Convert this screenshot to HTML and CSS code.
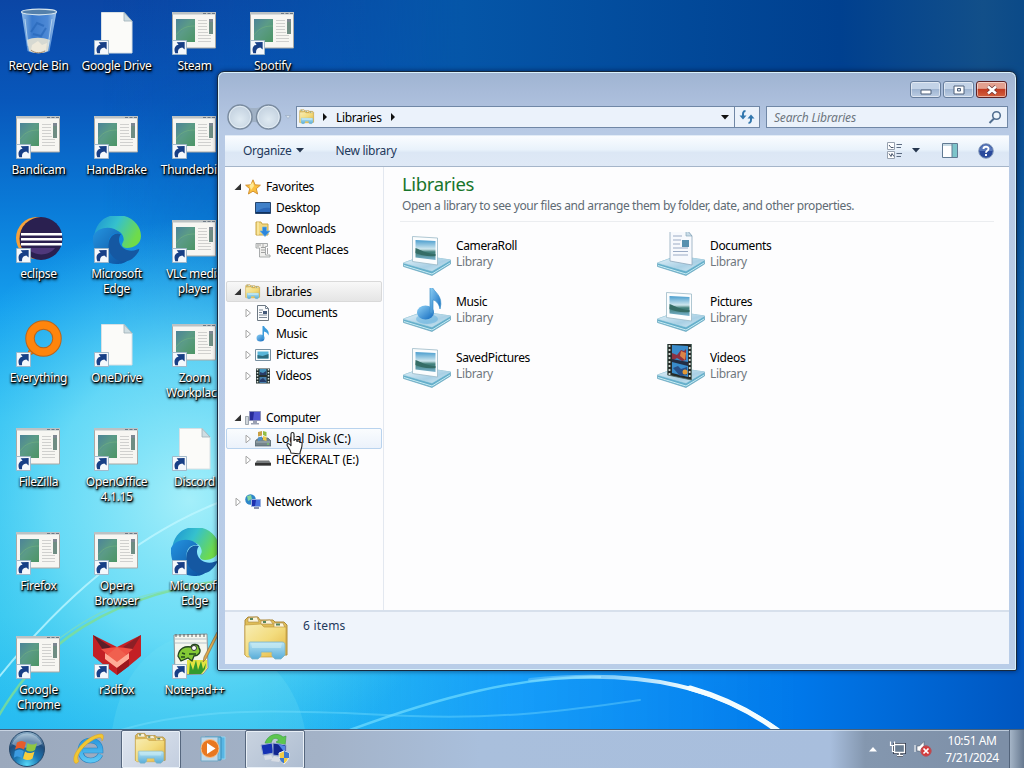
FILE: index.html
```html
<!DOCTYPE html>
<html lang="en">
<head>
<meta charset="utf-8">
<title>Libraries</title>
<link rel="stylesheet" href="styles.css">
</head>
<body>
<svg class="defs" width="0" height="0">
  <defs>
    <linearGradient id="gGreen" x1="0" y1="0" x2="1" y2="1"><stop offset="0" stop-color="#4c8398"/><stop offset=".45" stop-color="#5b9b87"/><stop offset="1" stop-color="#4c9564"/></linearGradient>
    <linearGradient id="gFolder" x1="0" y1="0" x2="1" y2="1"><stop offset="0" stop-color="#f7edb5"/><stop offset=".5" stop-color="#f3dc7e"/><stop offset="1" stop-color="#e4b43e"/></linearGradient>
    <linearGradient id="gStand" x1="0" y1="0" x2="0" y2="1"><stop offset="0" stop-color="#b9e4f4"/><stop offset="1" stop-color="#58add9"/></linearGradient>
    <linearGradient id="gBase" x1="0" y1="0" x2="1" y2="1"><stop offset="0" stop-color="#e8f4fa"/><stop offset=".6" stop-color="#a9d0e5"/><stop offset="1" stop-color="#d5eaf4"/></linearGradient>
    <linearGradient id="gSky" x1="0" y1="0" x2="0" y2="1"><stop offset="0" stop-color="#4a9dce"/><stop offset=".45" stop-color="#cfe7ee"/><stop offset=".6" stop-color="#3f7e78"/><stop offset="1" stop-color="#79b3d0"/></linearGradient>
    <linearGradient id="gNote" x1="0" y1="0" x2="1" y2="1"><stop offset="0" stop-color="#8fd2f6"/><stop offset="1" stop-color="#0f67bd"/></linearGradient>
    <linearGradient id="gEdgeTop" x1="0" y1="0" x2="1" y2=".4"><stop offset="0" stop-color="#1b8fd3"/><stop offset=".5" stop-color="#35c1cd"/><stop offset="1" stop-color="#6fdb4a"/></linearGradient>
    <linearGradient id="gEdgeBot" x1="0" y1="0" x2="1" y2="1"><stop offset="0" stop-color="#2494e0"/><stop offset="1" stop-color="#0c4f9d"/></linearGradient>
    <linearGradient id="gBin" x1="0" y1="0" x2="1" y2="0"><stop offset="0" stop-color="#9ec7ee"/><stop offset=".3" stop-color="#3f7fd0"/><stop offset=".75" stop-color="#5590da"/><stop offset="1" stop-color="#aed2f3"/></linearGradient>
    <radialGradient id="gOrb" cx=".5" cy=".95" r=".9"><stop offset="0" stop-color="#55d8f8"/><stop offset=".4" stop-color="#1c76b2"/><stop offset=".75" stop-color="#1f4c7b"/><stop offset="1" stop-color="#86a9c4"/></radialGradient>
    <radialGradient id="gRound" cx=".5" cy=".6" r=".6"><stop offset="0" stop-color="#dfeaf2"/><stop offset=".6" stop-color="#cddae6"/><stop offset="1" stop-color="#c2d0de"/></radialGradient>
    <linearGradient id="gIe" x1="0" y1="0" x2="0" y2="1"><stop offset="0" stop-color="#2d9be0"/><stop offset="1" stop-color="#5bc6f4"/></linearGradient>

    <symbol id="arrow" viewBox="0 0 16 16"><path d="M.5.5h15v15H.5z" fill="#f4f8fc" stroke="#9db4c6"/><path d="M3.500 14C1.500 9 3.500 5.500 7 5L5 2.500l8.500-.5V10L11 8C8 8.500 6 10 6.500 14z" fill="#173f86"/></symbol>
    <symbol id="app" viewBox="0 0 48 48">
      <path d="M1.500 4.500h43v35.500h-43z" fill="#f7f6f2" stroke="#a9a9a5"/><path d="M1 4h44v2.500H1z" fill="#bcc2c4"/><path d="M32 5.500h12" stroke="#6d7885" stroke-dasharray="3 1.500"/>
      <path d="M5 11h19v23H5z" fill="url(#gGreen)"/><path d="M5 27c6-8 12-9 19-9" stroke="#6fae82" fill="none" opacity=".7"/>
      <path d="M27 12.500h9M27 15.500h9M27 18.500h9M27 21.500h9M27 24.500h10M27 27.500h13M27 30.500h13M27 33.500h13" stroke="#d0d0ce"/>
      <path d="M38 11h4v15h-4z" fill="#6f8d83"/><path d="M38 11h4v3h-4z" fill="#7d8792"/>
    </symbol>
    <symbol id="page" viewBox="0 0 48 48"><path d="M8.500 4.500H31l8 9V45H8.500z" fill="#fbfbf9" stroke="#d8e0e4"/><path d="M31 4.500v8.500h8z" fill="#cfdde2" stroke="#9fb0b8" stroke-width=".8"/></symbol>
    <symbol id="bin" viewBox="0 0 48 48"><path d="M6.500 4l6 39c5 3 17 3 22 0l7-39z" fill="url(#gBin)" opacity=".9"/><path d="M12 32c6-3 15-3 23 0l-2 11c-6 3-13 3-19 0z" fill="#d6d9d2"/><path d="M17 37l6-4 4 4 5-2-1 7-8 3-7-3z" fill="#eee9da"/><path d="M16 42c4 4 11 3 14 1" stroke="#a6896a" fill="none"/><ellipse cx="24" cy="4" rx="17.500" ry="2.800" fill="#5480ab" stroke="#d5e4ed" stroke-width="1.200"/><path d="M10 11l3 27M37 11l-4 27" stroke="#cde5f5" opacity=".7"/><path d="M16 24l6-9 7 3M18 26l8 2 5-8" stroke="#2765b7" fill="none" stroke-width="2" opacity=".65"/></symbol>
    <symbol id="eclipse" viewBox="0 0 48 48"><circle cx="22" cy="22" r="21" fill="#f6a13a"/><circle cx="26" cy="22.500" r="21.500" fill="#2a2050"/><path d="M6 17h41v2.500H6zM6 22h41v2.500H6zM6 27h41v2.500H6z" fill="#fff"/><path d="M12 32h28c-6 8-20 9-28 0z" fill="#4f387b"/></symbol>
    <symbol id="edge" viewBox="0 0 48 48"><path d="M1 22C2 7 12-1 24-1c14 0 24 10 24 21 0 8-7 12-14 12-5 0-6-3-4-6 2-3 0-11-9-12C12 13 4 17 1 22z" fill="url(#gEdgeTop)"/><path d="M0 20C5 10 20 9 27 17c-8-1-13 5-11 14 1 9 9 14 18 14-4 3-8 3-11 3C6 47-1 34 0 20z" fill="url(#gEdgeBot)"/><path d="M16 25c2-6 7-9 12-7-4 5-2 13 6 16 6 2 11-1 12-1 1 1-2 6-7 10-10 7-27-2-23-18z" fill="#1558a2"/></symbol>
    <symbol id="everything" viewBox="0 0 48 48"><path d="M16 27l-5 9 9-3z" fill="#f47d0c" stroke="#b8661e"/><circle cx="28.500" cy="18.500" r="13.500" fill="none" stroke="#b8651d" stroke-width="9.500"/><circle cx="28.500" cy="18.500" r="13.500" fill="none" stroke="#ff850c" stroke-width="7.500"/></symbol>
    <symbol id="fox" viewBox="0 0 48 48"><path d="M0 3l24 12L48 3v21L36 34 24 43 12 34 0 24z" fill="#c32025"/><path d="M0 3l18 12-8 3z" fill="#5b2028"/><path d="M48 3L30 15l9 3z" fill="#8c1f26"/><path d="M8 17l16-2 16 2-16 14z" fill="#ef5145"/><path d="M24 15l12 10-12 8-12-8z" fill="#f0604f"/><path d="M12 21l12 9 12-9v6l-12 9-12-9z" fill="#ffab97"/><path d="M24 36l12-9v7l-12 9z" fill="#9c171d"/></symbol>
    <symbol id="npp" viewBox="0 0 48 48"><path d="M3 3l33-1 1 34-5 6-28 1z" fill="#f5f7ef" stroke="#8b9395"/><path d="M4 7h32M4 11h32" stroke="#b7c3c9"/><path d="M5 2v3M9 2v3M13 2v3M17 2v3M21 2v3M25 2v3M29 2v3M33 2v3" stroke="#596062"/><path d="M16 28h20v8l-5 6H16z" fill="#e2e340"/><path d="M18 42l1-12 3 8 3-10 2 10 3-9 2 8 3-6-1 6-4 5z" fill="#349a2e"/><path d="M7 24c1-8 7-10 13-9 1-4 8-3 8 1 3 4-1 8-5 8l-2 5-4-3-7 3z" fill="#83c936" stroke="#23451f" stroke-width="1.300"/><circle cx="23" cy="16" r="2.500" fill="#fff" stroke="#333"/><path d="M11 21l3 1M10 25l4 0M18 22l7 0" stroke="#224c1c" stroke-width="1.500"/><path d="M46 0l2 1-13 26-3 3 1-5z" fill="#dfa94b" stroke="#7c633f" stroke-width=".6"/></symbol>

    <symbol id="folder" viewBox="0 0 48 48">
      <path d="M2 40V5l3-3h10l2 3h13l2 2h9l3 3v30z" fill="#dfbd58" stroke="#ad8b3b"/><path d="M5 3l9-1 2 5H5zM18 6l9-1 3 4H18zM31 8h9l2 5H31z" fill="#fbf5dc" stroke="#a88744" stroke-width=".6"/><path d="M7 3h3v2H7zM20 6h3v2h-3zM33 8.500h4v2h-4z" fill="#56855e"/>
      <path d="M2 10l16-1 3 3h22v27l-3 3H4l-2-2z" fill="url(#gFolder)" stroke="#c39c3e" stroke-width=".7"/>
      <path d="M7 27h32c2 0 3 1 3 3v10l-4 4h-6l-3-3v-4H18v4l-3 3H9l-3-4V30c0-2 0-3 1-3z" fill="url(#gStand)" stroke="#7fb5c8" stroke-width=".8"/><path d="M8 28h31l-1 5H9z" fill="#ccecf3" opacity=".6"/>
    </symbol>
    <symbol id="base" viewBox="0 0 48 48"><path d="M.5 31L20 24l27.500 4v4L29 43.500.5 34.500z" fill="#65afcb" stroke="#6ca6bd" stroke-width=".7"/><path d="M.5 31L20 24l27.500 4L29 39z" fill="url(#gBase)" stroke="#b9dcea" stroke-width=".6"/><path d="M1 33.500L29 42l18-11" fill="none" stroke="#c9ecf3"/></symbol>
    <symbol id="libPic" viewBox="0 0 48 48"><use href="#base"/><path d="M9.500 4.500l25 1.500V33l-25-3.500z" fill="#fbfdfe" stroke="#9bb9c7" stroke-width=".8"/><path d="M12.500 8l20 1v19l-20-2.500z" fill="url(#gSky)"/><path d="M12.500 16c6 2 9 5 20 6v2c-9 1-15-1-20-3z" fill="#356d66"/></symbol>
    <symbol id="libMusic" viewBox="0 0 48 48"><use href="#base"/><ellipse cx="24" cy="31" rx="11" ry="5" fill="#5aaee0" opacity=".5"/><ellipse cx="22.500" cy="24.500" rx="8.500" ry="7" fill="url(#gNote)"/><path d="M27-2h2c1 6 12 9 8 23-1-6-5-9-7-9v13h-3z" fill="url(#gNote)" stroke="#3d90c8" stroke-width=".7"/></symbol>
    <symbol id="libDoc" viewBox="0 0 48 48"><use href="#base"/><path d="M13-2l16-1 6 7v29l-22-4z" fill="#f7f9fd" stroke="#8fa8bd" stroke-width=".8"/><path d="M29-3v7h6z" fill="#c9dce8" stroke="#7d9eb3" stroke-width=".6"/><path d="M16 4h9M16 8h8M16 12h7M16 16h15M16 19.500h15M16 23h15" stroke="#9babc5" stroke-width="1.100"/><path d="M25 8h7v7h-7z" fill="#5690af"/></symbol>
    <symbol id="libVid" viewBox="0 0 48 48"><use href="#base"/><path d="M10.500-2l24 2v36l-24-5z" fill="#252b29" stroke="#57706a" stroke-width=".8"/><path d="M12.500 1v30M32.700 3v32" stroke="#ced8d1" stroke-width="1.800" stroke-dasharray="2 2"/><path d="M15 1l16 1v31l-16-4z" fill="#3a8ccb"/><path d="M15 9l5 2 4-5 3 1 2-2v11l-4 1-5-3-5 3z" fill="#8c3140"/><path d="M24 7l5 2-1 7-5-4z" fill="#da8447"/><path d="M15 15l16 3v4l-16-4z" fill="#222e45"/><path d="M16 24l5-2 3 3 6-2v8l-7 1z" fill="#284f87"/><circle cx="28" cy="28" r="2.500" fill="#e49a35"/></symbol>

    <symbol id="star" viewBox="0 0 16 16"><path d="M8 .8l2.100 5 5.300.4-4.100 3.500 1.300 5.300L8 12.200 3.400 15l1.300-5.300L.6 6.200 5.900 5.800z" fill="#fbc040" stroke="#cf8c2d" stroke-width=".9"/><path d="M8 3l1 4-3 4-1.500-4.500z" fill="#ffe995"/></symbol>
    <symbol id="desk" viewBox="0 0 16 16"><path d="M.5 2.500h15v11H.5z" fill="#2b67b8" stroke="#26456d"/><path d="M1 3h14v5C9 7 5 9 1 12z" fill="#4080c8"/><path d="M1 12h14v1H1z" fill="#10325f"/></symbol>
    <symbol id="down" viewBox="0 0 16 16"><path d="M1 1h5l1 2h6v11H1z" fill="#f2d77d" stroke="#caa749"/><path d="M3 1v13" stroke="#fff4bb"/><path d="M7.500 6h4v4h3.500L10 15.500 5 10h2.500z" fill="#2c86dc" stroke="#66afe8" stroke-width=".7"/></symbol>
    <symbol id="recent" viewBox="0 0 16 16"><path d="M1 1.500h11.500v3h-2V13H15v2H4.500V6H1z" fill="#efefed" stroke="#96999b" stroke-width=".8"/><path d="M6 5.500h4M6 8h4M6 10.500h4M3 2v3M12.500 12V6" stroke="#8d8d8d" stroke-width=".8"/><path d="M5 2v2M8 2v3" stroke="#aaa"/></symbol>
    <symbol id="docS" viewBox="0 0 16 16"><path d="M2.500.5h8l3 3v12h-11z" fill="#fafbfc" stroke="#6d7883"/><path d="M10.500.5v3h3M4 5h4M4 7.500h3M4 10h8M4 12.500h8" fill="none" stroke="#7b8796"/><path d="M8 6h4v3H8z" fill="#435878"/></symbol>
    <symbol id="noteS" viewBox="0 0 16 16"><ellipse cx="5.500" cy="12" rx="4" ry="3.500" fill="url(#gNote)"/><path d="M7.500 0H9c1 3 6 4 4.500 9.500-1-3-3-3.500-4.500-4V13H7.500z" fill="#3b9bdc"/></symbol>
    <symbol id="picS" viewBox="0 0 16 16"><path d="M.5 2.500h15v11H.5z" fill="#f8fbfc" stroke="#7890a1"/><path d="M2.500 4.500h11v7h-11z" fill="#58b5d8"/><path d="M2.500 8l5 1 6-2v4.500h-11z" fill="#2d6c7f"/></symbol>
    <symbol id="vidS" viewBox="0 0 16 16"><path d="M1 .5h14v15H1z" fill="#24302f"/><path d="M2.500 1v14M13.500 1v14" stroke="#d9e4dd" stroke-width="1.500" stroke-dasharray="1.500 1.500"/><path d="M4.500 1h7v6h-7z" fill="#4695bd"/><path d="M4.500 9h7v6h-7z" fill="#477faa"/><path d="M5 4l3 1 3-2v4H5zM5 12l3-2 3 3v1H5z" fill="#283c68"/></symbol>
    <symbol id="pc" viewBox="0 0 16 16"><path d="M.5 6.500h3v8h-3z" fill="#d1d7dd" stroke="#7f8992" stroke-width=".7"/><path d="M4.500 1.500h11v9h-11z" fill="#272b98" stroke="#8c91ba"/><path d="M9 2h6v8H8z" fill="#5056d0"/><path d="M8 11h4v2h2v1.500H6V13h2z" fill="#9aa1b3"/></symbol>
    <symbol id="disk" viewBox="0 0 16 16"><path d="M1 9l3-2h9l3 3v5H0v-4z" fill="#75848c" stroke="#52636c" stroke-width=".7"/><path d="M1 11h14" stroke="#a4b4ba"/><path d="M3 1l4-1v4.500l-4 1z" fill="#c9a044"/><path d="M8 0l3.500 1v4.500L8 4z" fill="#93bd45"/><path d="M3 6.500l4-1V9L3 10z" fill="#4f91c7"/><path d="M8 5l3.500 1v4L8 9z" fill="#eccb49"/><path d="M12 13h2" stroke="#7fe45a"/></symbol>
    <symbol id="drive" viewBox="0 0 16 16"><path d="M2.500 8h11L16 11v2.500H0V11z" fill="#777b7d"/><path d="M0 11h16v2.500H0z" fill="#333"/><path d="M2.500 8h11l1 1h-13z" fill="#bbb"/></symbol>
    <symbol id="net" viewBox="0 0 16 16"><circle cx="5.500" cy="5.500" r="5.300" fill="#2e87c9"/><path d="M2 2l4-1 1 4-4 2zM6 8l3-2 1 3-3 2z" fill="#85d59d"/><path d="M6.500 5.500h9v7h-9z" fill="#1d2fae" stroke="#9bb2df"/><path d="M11 6h4v6h-5z" fill="#4871e0"/><path d="M9 13h5v2H9z" fill="#8991af"/></symbol>
    <symbol id="closed" viewBox="0 0 8 10"><path d="M2 1.200L6.500 5 2 8.800z" fill="#fff" stroke="#a5a5a5"/></symbol>
    <symbol id="opened" viewBox="0 0 8 10"><path d="M7 1.500V8H.5z" fill="#333"/></symbol>
  </defs>
</svg>

<div class="screen">
  <svg class="wallpaper" viewBox="0 0 1024 768" preserveAspectRatio="none">
    <defs>
      <linearGradient id="w1" x1="0" y1="0" x2="0" y2="1"><stop offset="0" stop-color="#0b46a5"/><stop offset=".13" stop-color="#0857bb"/><stop offset=".27" stop-color="#0a7bd8"/><stop offset=".4" stop-color="#159fee"/><stop offset=".55" stop-color="#29bdf3"/><stop offset=".8" stop-color="#30c6ef"/><stop offset="1" stop-color="#24b8f2"/></linearGradient>
      <linearGradient id="w2" x1="0" y1="0" x2="1" y2="0"><stop offset=".25" stop-color="#149cf5" stop-opacity="0"/><stop offset=".5" stop-color="#149afa" stop-opacity=".9"/><stop offset=".78" stop-color="#0078ea"/><stop offset="1" stop-color="#0056c0"/></linearGradient>
      <linearGradient id="w4" x1="0" y1="0" x2="1" y2="0"><stop offset=".1" stop-color="#0653b0" stop-opacity="0"/><stop offset=".45" stop-color="#0556a8"/><stop offset=".82" stop-color="#00408f"/><stop offset=".96" stop-color="#124f89"/><stop offset="1" stop-color="#0b4a88"/></linearGradient>
      <radialGradient id="w3" gradientUnits="userSpaceOnUse" cx="190" cy="500" r="280"><stop offset="0" stop-color="#a4effa"/><stop offset=".5" stop-color="#78e2f8" stop-opacity=".75"/><stop offset="1" stop-color="#45caf2" stop-opacity="0"/></radialGradient>
      <linearGradient id="fadeIn" gradientUnits="userSpaceOnUse" x1="0" y1="80" x2="0" y2="560"><stop offset="0" stop-color="#000"/><stop offset="1" stop-color="#fff"/></linearGradient>
      <linearGradient id="fadeOut" gradientUnits="userSpaceOnUse" x1="0" y1="60" x2="0" y2="560"><stop offset="0" stop-color="#fff"/><stop offset="1" stop-color="#000"/></linearGradient>
      <mask id="mLow" maskUnits="userSpaceOnUse" x="0" y="0" width="1024" height="768"><path d="M0 0h1024v768H0z" fill="url(#fadeIn)"/></mask>
      <mask id="mHigh" maskUnits="userSpaceOnUse" x="0" y="0" width="1024" height="768"><path d="M0 0h1024v768H0z" fill="url(#fadeOut)"/></mask>
      <linearGradient id="arc" gradientUnits="userSpaceOnUse" x1="530" y1="0" x2="690" y2="0"><stop offset="0" stop-color="#9be6ff" stop-opacity=".3"/><stop offset="1" stop-color="#f4fdff"/></linearGradient>
    </defs>
    <path d="M0 0h1024v768H0z" fill="url(#w1)"/>
    <path d="M0 0h1024v768H0z" fill="url(#w2)" mask="url(#mLow)"/>
    <path d="M0 0h1024v768H0z" fill="url(#w4)" mask="url(#mHigh)"/>
    <path d="M0 200h500v568H0z" fill="url(#w3)"/>
    <path d="M112 730C125 650 180 622 230 640s70 60 75 90z" fill="#7ee6f7" opacity=".2"/>
    <g fill="none" stroke-linecap="round">
      <path d="M-5 682C60 600 135 535 220 502" stroke="#bdf6ff" stroke-width="2" opacity=".8"/>
      <path d="M-5 722C28 665 80 600 225 580" stroke="#7fdf92" stroke-width="2.500" opacity=".8"/>
      <path d="M55 642C95 610 150 585 222 586" stroke="#84e0b4" stroke-width="1.500" opacity=".6"/>
      <path d="M105 735C200 702 310 712 410 716S580 708 640 700" stroke="#83e5ff" stroke-width="2" opacity=".35"/>
      <path d="M350 730C440 697 520 676 600 677" stroke="#70ddff" stroke-width="2.500" opacity=".7"/>
      <path d="M530 680C650 668 720 690 778 730" stroke="url(#arc)" stroke-width="4"/>
      <path d="M690 688C725 698 752 712 775 729" stroke="#f4fdff" stroke-width="5"/>
    </g>
  </svg>

  <main class="desktop">
    <div class="shortcut"><svg class="ico"><use href="#bin"/></svg><span>Recycle Bin</span></div>
    <div class="shortcut"><svg class="ico"><use href="#app"/><use href="#arrow" x="1" y="32" width="15" height="15"/></svg><span>Bandicam</span></div>
    <div class="shortcut"><svg class="ico"><use href="#eclipse"/><use href="#arrow" x="1" y="32" width="15" height="15"/></svg><span>eclipse</span></div>
    <div class="shortcut"><svg class="ico"><use href="#everything"/><use href="#arrow" x="1" y="32" width="15" height="15"/></svg><span>Everything</span></div>
    <div class="shortcut"><svg class="ico"><use href="#app"/><use href="#arrow" x="1" y="32" width="15" height="15"/></svg><span>FileZilla</span></div>
    <div class="shortcut"><svg class="ico"><use href="#app"/><use href="#arrow" x="1" y="32" width="15" height="15"/></svg><span>Firefox</span></div>
    <div class="shortcut"><svg class="ico"><use href="#app"/><use href="#arrow" x="1" y="32" width="15" height="15"/></svg><span>Google<br>Chrome</span></div>

    <div class="shortcut"><svg class="ico"><use href="#page"/><use href="#arrow" x="1" y="32" width="15" height="15"/></svg><span>Google Drive</span></div>
    <div class="shortcut"><svg class="ico"><use href="#app"/><use href="#arrow" x="1" y="32" width="15" height="15"/></svg><span>HandBrake</span></div>
    <div class="shortcut"><svg class="ico"><use href="#edge"/><use href="#arrow" x="1" y="32" width="15" height="15"/></svg><span>Microsoft<br>Edge</span></div>
    <div class="shortcut"><svg class="ico"><use href="#page"/><use href="#arrow" x="1" y="32" width="15" height="15"/></svg><span>OneDrive</span></div>
    <div class="shortcut"><svg class="ico"><use href="#app"/><use href="#arrow" x="1" y="32" width="15" height="15"/></svg><span>OpenOffice<br>4.1.15</span></div>
    <div class="shortcut"><svg class="ico"><use href="#app"/><use href="#arrow" x="1" y="32" width="15" height="15"/></svg><span>Opera<br>Browser</span></div>
    <div class="shortcut"><svg class="ico"><use href="#fox"/><use href="#arrow" x="1" y="32" width="15" height="15"/></svg><span>r3dfox</span></div>

    <div class="shortcut"><svg class="ico"><use href="#app"/><use href="#arrow" x="1" y="32" width="15" height="15"/></svg><span>Steam</span></div>
    <div class="shortcut"><svg class="ico"><use href="#app"/><use href="#arrow" x="1" y="32" width="15" height="15"/></svg><span>Thunderbird</span></div>
    <div class="shortcut"><svg class="ico"><use href="#app"/><use href="#arrow" x="1" y="32" width="15" height="15"/></svg><span>VLC media<br>player</span></div>
    <div class="shortcut"><svg class="ico"><use href="#app"/><use href="#arrow" x="1" y="32" width="15" height="15"/></svg><span>Zoom<br>Workplace</span></div>
    <div class="shortcut"><svg class="ico"><use href="#page"/><use href="#arrow" x="1" y="32" width="15" height="15"/></svg><span>Discord</span></div>
    <div class="shortcut"><svg class="ico"><use href="#edge"/><use href="#arrow" x="1" y="32" width="15" height="15"/></svg><span>Microsoft<br>Edge</span></div>
    <div class="shortcut"><svg class="ico"><use href="#npp"/><use href="#arrow" x="1" y="32" width="15" height="15"/></svg><span>Notepad++</span></div>

    <div class="shortcut"><svg class="ico"><use href="#app"/><use href="#arrow" x="1" y="32" width="15" height="15"/></svg><span>Spotify</span></div>
  </main>

  <section class="window">
    <header class="titlebar">
      <div class="wbtn"><svg class="min" width="12" height="6"><path d="M1 1h10v4H1z" fill="#fff" stroke="#4d5f78"/></svg></div>
      <div class="wbtn"><svg width="12" height="10"><path d="M1 1h10v8H1z" fill="#fff" stroke="#4d5f78"/><path d="M4.500 3.500h3v2.500h-3z" fill="#cfdcec" stroke="#4d5f78"/></svg></div>
      <div class="wbtn close"><svg width="12" height="10"><path d="M2 1.500l8 7m0-7l-8 7" stroke="#6d3434" stroke-width="4"/><path d="M2 1.500l8 7m0-7l-8 7" stroke="#fff" stroke-width="2.600"/></svg></div>
    </header>
    <div class="navrow">
      <svg class="travel" width="66" height="28"><path d="M12 4c8 0 9 2 16 2s7-2 15-2v20c-8 0-9-4-15-4s-8 4-16 4z" fill="#a0b1c5"/><g fill="url(#gRound)" stroke="#7a8b9f" stroke-width="1.500"><circle cx="14" cy="15" r="12"/><circle cx="42.500" cy="15" r="12"/></g><g fill="none" stroke="#e9f1f7" opacity=".8"><circle cx="14" cy="15" r="10.700"/><circle cx="42.500" cy="15" r="10.700"/></g><path d="M59.500 13.500h5l-2.500 3z" fill="#dbe5f0" stroke="#93a5ba" stroke-width=".6"/></svg>
      <div class="address">
        <svg width="16" height="16"><use href="#folder"/></svg>
        <svg class="chev" width="6" height="8"><path d="M1 0l4 4-4 4z" fill="#111"/></svg>
        <span>Libraries</span>
        <svg class="chev" width="6" height="8"><path d="M1 0l4 4-4 4z" fill="#111"/></svg>
        <svg class="drop" width="8" height="5"><path d="M0 0h8L4 4.500z" fill="#111"/></svg>
      </div>
      <div class="refresh"><svg width="16" height="14"><path d="M6.500 1C3.500 1 4 4 4 7M9.500 13c3 0 2.500-3 2.500-6" fill="none" stroke="#3277ae" stroke-width="2"/><path d="M.5 5.500h7L4 9.500zM8.500 8.500h7L12 4.500z" fill="#3277ae"/></svg></div>
      <div class="search"><span>Search Libraries</span><svg width="14" height="14"><circle cx="8.500" cy="5.500" r="3.800" fill="#eef5fb" stroke="#526f91" stroke-width="1.600"/><path d="M6 8.500L1.500 13" stroke="#526f91" stroke-width="2"/></svg></div>
    </div>
    <div class="toolbar">
      <span>Organize</span><svg class="tri" width="8" height="5"><path d="M0 0h8L4 4.500z" fill="#26364e"/></svg>
      <span class="newlib">New library</span>
      <svg class="view" width="17" height="17"><path d="M1.500.5h7v7h-7zM1.500 9.500h7v7h-7z" fill="#fff" stroke="#98a2b0"/><path d="M3 3l2 2.500h2.500M3 11.500l2 3 1-3 2 3" stroke="#45536a" fill="none"/><path d="M10.500 2.500H16M10.500 5.500H15M10.500 11.500H16M10.500 14.500H15" stroke="#5b6a80"/></svg>
      <svg class="tri" width="8" height="5"><path d="M0 0h8L4 4.500z" fill="#26364e"/></svg>
      <svg class="pane" width="16" height="15"><path d="M.5.500h15v14H.5z" fill="#fff" stroke="#617a92"/><path d="M1 1h14v2H1z" fill="#c7dbe5"/><path d="M10 1h5v13h-5z" fill="#7cc4ca"/><path d="M10 1v13" stroke="#617a92"/></svg>
      <svg class="help" width="16" height="16"><circle cx="8" cy="8" r="7.300" fill="#2a4a9c" stroke="#8a9fbe"/><path d="M1.500 8a6.500 6.500 0 0 1 13 0z" fill="#7896cf" opacity=".6"/><path d="M5.500 6c0-3 5-3 5-.2C10.500 8 8 7.700 8 9.800M8 11v2" fill="none" stroke="#fff" stroke-width="1.900"/></svg>
    </div>
    <div class="body">
      <nav class="tree">
        <div class="row"><svg class="tw"><use href="#opened"/></svg><svg class="si"><use href="#star"/></svg><span>Favorites</span></div>
        <div class="row sub"><i class="tw"></i><svg class="si"><use href="#desk"/></svg><span>Desktop</span></div>
        <div class="row sub"><i class="tw"></i><svg class="si"><use href="#down"/></svg><span>Downloads</span></div>
        <div class="row sub"><i class="tw"></i><svg class="si"><use href="#recent"/></svg><span>Recent Places</span></div>
        <div class="row gap selected"><svg class="tw"><use href="#opened"/></svg><svg class="si"><use href="#folder"/></svg><span>Libraries</span></div>
        <div class="row sub"><svg class="tw"><use href="#closed"/></svg><svg class="si"><use href="#docS"/></svg><span>Documents</span></div>
        <div class="row sub"><svg class="tw"><use href="#closed"/></svg><svg class="si"><use href="#noteS"/></svg><span>Music</span></div>
        <div class="row sub"><svg class="tw"><use href="#closed"/></svg><svg class="si"><use href="#picS"/></svg><span>Pictures</span></div>
        <div class="row sub"><svg class="tw"><use href="#closed"/></svg><svg class="si"><use href="#vidS"/></svg><span>Videos</span></div>
        <div class="row gap"><svg class="tw"><use href="#opened"/></svg><svg class="si"><use href="#pc"/></svg><span>Computer</span></div>
        <div class="row sub hover"><svg class="tw"><use href="#closed"/></svg><svg class="si"><use href="#disk"/></svg><span class="wide">Local Disk (C:)</span></div>
        <div class="row sub"><svg class="tw"><use href="#closed"/></svg><svg class="si"><use href="#drive"/></svg><span class="wide">HECKERALT (E:)</span></div>
        <div class="row gap"><svg class="tw"><use href="#closed"/></svg><svg class="si"><use href="#net"/></svg><span>Network</span></div>
      </nav>
      <article class="content">
        <h1>Libraries</h1>
        <p class="intro">Open a library to see your files and arrange them by folder, date, and other properties.</p>
        <div class="libs">
          <div class="lib"><svg class="ico"><use href="#libPic"/></svg><div><b>CameraRoll</b><small>Library</small></div></div>
          <div class="lib"><svg class="ico"><use href="#libDoc"/></svg><div><b>Documents</b><small>Library</small></div></div>
          <div class="lib"><svg class="ico"><use href="#libMusic"/></svg><div><b>Music</b><small>Library</small></div></div>
          <div class="lib"><svg class="ico"><use href="#libPic"/></svg><div><b>Pictures</b><small>Library</small></div></div>
          <div class="lib"><svg class="ico"><use href="#libPic"/></svg><div><b>SavedPictures</b><small>Library</small></div></div>
          <div class="lib"><svg class="ico"><use href="#libVid"/></svg><div><b>Videos</b><small>Library</small></div></div>
        </div>
      </article>
    </div>
    <footer class="details"><svg class="ico"><use href="#folder"/></svg><span>6 items</span></footer>
  </section>

  <footer class="taskbar">
    <svg class="orb" width="38" height="38" viewBox="0 0 38 38"><circle cx="19" cy="19" r="17.500" fill="url(#gOrb)" stroke="#26486a"/><path d="M4 14a16 16 0 0 1 30 0c-9 5-21 5-30 0z" fill="#e5f3fb" opacity=".4"/><path d="M9 12.500c3-2 6-2 9 0l-2 7c-3-2-6-2-9 0z" fill="#e65c2b"/><path d="M19.500 13c3 2 6 2 9.500 0l-2 7c-3 2-6 2-9 0z" fill="#8fc742"/><path d="M6.800 21c3-2 6-2 9 0l-2 7c-3-2-6-2-8 0z" fill="#3c9be0"/><path d="M17 21.500c3 2 6 2 9.500 0l-2 7c-3 2-6 2-9.500 0z" fill="#f8cd3c"/></svg>
    <div class="task"><svg width="34" height="34" viewBox="0 0 34 34"><path d="M28.500 22.500c-2 4-6 6-10 6-6 0-10-4-10-10s4-10 10-10 10 4 10 10H11" fill="none" stroke="#2a80bd" stroke-width="5.600"/><path d="M28.500 22.500c-2 4-6 6-10 6-6 0-10-4-10-10s4-10 10-10 10 4 10 10H11" fill="none" stroke="url(#gIe)" stroke-width="4.400"/><path d="M3 31C-3 24 14 3 29 2c3 0 3 4 1 7 0-5-4-4-9-1C12 13 2 25 7 29c-1 2-3 3-4 2z" fill="#f2c732" stroke="#d99d23" stroke-width=".5"/></svg></div>
    <div class="task active"><svg width="34" height="34"><use href="#folder"/></svg></div>
    <div class="task"><svg width="28" height="28" viewBox="0 0 28 28"><path d="M10 2h16v22H10z" fill="#58b6e4" stroke="#91d5f0"/><path d="M6 2h16v23H6z" fill="#75c4e9" stroke="#388db8"/><path d="M2 2h17v24H2z" fill="#c0d9ea" stroke="#72a9c6"/><circle cx="11" cy="13.500" r="9" fill="#e87821" stroke="#f7bd86"/><path d="M8 8l8.500 5.500L8 19z" fill="#fff"/></svg></div>
    <div class="task active"><svg width="34" height="34" viewBox="0 0 34 34"><path d="M7 11C10 2 20 0 25 5l3-1-1 11-9-5 3-2c-4-3-7-2-8 4z" fill="#5cc64f" stroke="#3b9c43" stroke-width=".6"/><path d="M3 13l11-2 2 10-11 2z" fill="#1532b4" stroke="#9bacce"/><path d="M15 11l13 2v12l-13-2z" fill="#11268f" stroke="#98aad1"/><path d="M20 12l7 2v7z" fill="#5283e7"/><path d="M6 24l7-1 2 4-8 1zM16 24l8 2-3 4-8-1z" fill="#d7dce4"/><path d="M21 21l5-2 5 2c0 5-1 8-5 11-4-3-5-6-5-11z" fill="#f2cb45" stroke="#edf3f8"/><path d="M26 19l5 2v5h-5zM21.500 26H26v5.500c-3-1.500-4-3.500-4.500-5.500z" fill="#3d78cf"/></svg></div>
    <div class="tray">
      <svg width="8" height="5"><path d="M0 4.500h8L4 0z" fill="#fff"/></svg>
      <svg class="neti" width="18" height="16"><path d="M5.500 3.500h10v8h-10zM8 14.500h6M10.500 12v2" fill="#697c91" stroke="#30394a" stroke-width="3"/><path d="M5.500 3.500h10v8h-10zM8 14.500h6M10.500 12v2" fill="#697c91" stroke="#fff" stroke-width="1.300"/><path d="M1.500.5v4h4v-4M3.500 4.500v6h2" fill="none" stroke="#fff" stroke-width="1.200"/></svg>
      <svg class="snd" width="18" height="16"><path d="M2 5h2.500L9 .5v14L4.500 10H2z" fill="#fff" stroke="#56606e" stroke-width=".6"/><path d="M0 4v7" stroke="#fff"/><circle cx="11" cy="10" r="5.200" fill="#d53b3b" stroke="#b05660"/><path d="M8.500 7.500l5 5m0-5l-5 5" stroke="#fff" stroke-width="1.700"/></svg>
      <div class="clock">10:51 AM<br>7/21/2024</div>
      <div class="peek"></div>
    </div>
  </footer>

  <svg class="cursor" width="20" height="26" viewBox="0 0 20 26"><path d="M6 22c0-4-5-7-4-9 1-1 3 0 4 2V3c0-2 3-2 3 0v7c0-2 3-2 3 0v1c0-2 3-1 3 1 0-1 3-1 2 2 0 4-2 5-2 9z" fill="#fff" stroke="#222" stroke-width="1.100"/></svg>
</div>
</body>
</html>
```
FILE: styles.css
```css
* { box-sizing: border-box; }
body { margin: 0; font-family: "Noto Sans", "Open Sans", sans-serif; font-size: 12px; letter-spacing: -0.36px; overflow: hidden; }
svg { display: block; flex: none; }
.defs { position: absolute; }
.screen { position: relative; width: 1024px; height: 768px; overflow: hidden; display: flex; flex-direction: column; background: #0874d1; }
.wallpaper { position: absolute; inset: 0; width: 1024px; height: 768px; }
.ico { width: 48px; height: 48px; overflow: visible; }

.desktop { position: relative; height: 729px; flex: none; display: grid; grid-template-rows: repeat(7, 104px); grid-auto-columns: 78px; grid-auto-flow: column; justify-content: start; }
.shortcut { display: flex; flex-direction: column; align-items: center; padding-top: 8px; color: #fff; text-align: center; line-height: 15px; letter-spacing: -0.28px; }
.shortcut span { margin: 2px 1px 0 0; white-space: nowrap; text-shadow: 1px 1px 1px #000, 0 1px 2px #000, 1px 2px 3px #000; }

.window { position: absolute; left: 217px; top: 71px; width: 800px; height: 600px; border: 1px solid #17293e; border-radius: 7px 7px 2px 2px; padding: 0 7px 6px 7px; background: linear-gradient(180deg, #9fb4d1 0, #a8bbd9 20px, #b8cae5 60px, #b9cde8 100%); box-shadow: inset 0 0 0 1px #d9f1fb, 0 0 5px rgba(0, 10, 40, .6); display: flex; flex-direction: column; }
.titlebar { height: 30px; display: flex; justify-content: flex-end; gap: 2px; padding: 9px 2px 0 0; }
.wbtn { width: 31px; height: 17px; border: 1px solid #667d9c; border-radius: 3px; background: linear-gradient(#c3d3e7 45%, #9fb5d2 50%, #bccde3); box-shadow: inset 0 0 0 1px rgba(255, 255, 255, .5); display: flex; align-items: center; justify-content: center; }
.wbtn .min { margin-top: 4px; }
.wbtn.close { border-color: #5b2226; background: linear-gradient(#e3a08f 42%, #c23c22 50%, #d3613f); }
.navrow { height: 33px; display: flex; align-items: flex-start; padding: 0 1px 0 1px; }
.travel { margin-right: 4px; }
.address, .refresh, .search { margin-top: 4px; height: 22px; border: 1px solid #7087a6; background: #ebf2fb; display: flex; align-items: center; }
.address { width: 439px; padding-left: 2px; }
.address span { margin: 0 8px; }
.address .chev { margin-left: 7px; }
.address span + .chev { margin-left: 0; }
.drop { margin-left: auto; margin-right: 5px; }
.refresh { width: 25px; border-left: 0; justify-content: center; }
.search { flex: 1; margin-left: 6px; padding: 0 5px 0 7px; justify-content: space-between; font-style: italic; color: #6d7680; letter-spacing: -0.2px; }
.toolbar { height: 32px; flex: none; display: flex; align-items: center; padding: 0 15px 1px 18px; color: #1e395b; background: linear-gradient(#fafcff 0, #e9f2fb 45%, #dce7f5 55%, #dfe9f6 100%); border-top: 1px solid #e1ebf6; border-bottom: 1px solid #a5b5c9; }
.toolbar .tri { margin-left: 5px; }
.toolbar .newlib { margin-left: 31px; letter-spacing: -0.28px; }
.toolbar .view { margin-left: auto; }
.toolbar .view + .tri { margin-left: 9px; }
.pane { margin-left: 22px; }
.help { margin-left: 20px; }

.body { height: 443px; flex: none; display: flex; background: #fdfdfe; }
.tree { width: 159px; border-right: 1px solid #e3e8f0; padding: 9px 1px 0 1px; }
.row { height: 21px; display: flex; align-items: center; padding-left: 7px; border: 1px solid transparent; white-space: nowrap; }
.row.sub { padding-left: 17px; }
.row.gap { margin-top: 21px; }
.tw { width: 8px; height: 10px; flex: none; }
.si { width: 16px; height: 16px; margin: 0 5px 0 3px; }
.wide { letter-spacing: -0.18px; }
.selected { background: linear-gradient(#f8f8f8, #e5e5e5); border-color: #d9d9d9; border-radius: 2px; }
.hover { background: linear-gradient(#fafcfe, #ebf2fb); border-color: #b9d3ee; border-radius: 2px; }
.content { flex: 1; padding: 5px 15px 0 18px; }
h1 { margin: 0; font-size: 18.500px; line-height: 23px; font-weight: 400; color: #17752c; }
.intro { margin: 0 0 8px -2px; padding: 2px 0 8px 2px; height: 27px; line-height: 17px; color: #5f6b74; letter-spacing: -0.39px; border-bottom: 1px solid #ebedf0; white-space: nowrap; }
.libs { display: grid; grid-template-columns: 254px 254px; grid-auto-rows: 56px; }
.lib { display: flex; gap: 6px; }
.lib .ico { margin: 2px -1px 0 1px; }
.lib > div { display: flex; flex-direction: column; padding-top: 8px; line-height: 16px; }
.lib b { font-weight: 400; }
.lib small { font-size: 12px; color: #707880; }
.details { flex: 1; display: flex; padding: 3px 0 0 18px; gap: 12px; background: #eff4fb; border-top: 2px solid #d7e0ec; color: #1e395b; line-height: 20px; letter-spacing: 0.2px; }
.details span { padding-top: 1px; }

.taskbar { position: relative; height: 39px; display: flex; align-items: center; border-top: 1px solid #46607b; background: linear-gradient(90deg, #9ba9bd 0, #a3b2c7 320px, #a9bfdc 480px, #a8bedd 830px, #8497af 865px, #7d8fa7 1000px); box-shadow: inset 0 1px 0 rgba(230, 240, 250, .6); }
.orb { margin: 0 13px 0 8px; }
.task { width: 60px; height: 39px; margin-right: 2px; display: flex; align-items: center; justify-content: center; border: 1px solid transparent; border-radius: 2px; }
.task.active { border-color: #56677e; background: linear-gradient(135deg, #dfe6ef, #c3cedf); box-shadow: inset 0 0 0 1px #e9f0f7; }
.task.active ~ .task.active { background: linear-gradient(135deg, #c9d3e0, #aebdd1); }
.tray { margin-left: auto; display: flex; align-items: center; height: 38px; color: #fff; }
.neti { margin-left: 12px; }
.snd { margin-left: 8px; overflow: visible; }
.clock { margin: 0 10px 0 12px; width: 54px; line-height: 17px; text-align: center; white-space: nowrap; letter-spacing: -0.4px; }
.peek { width: 15px; height: 38px; border-left: 1px solid #52637a; background: linear-gradient(90deg, #a5b5c7, #66788f); }
.cursor { position: absolute; left: 285px; top: 431px; }
```
